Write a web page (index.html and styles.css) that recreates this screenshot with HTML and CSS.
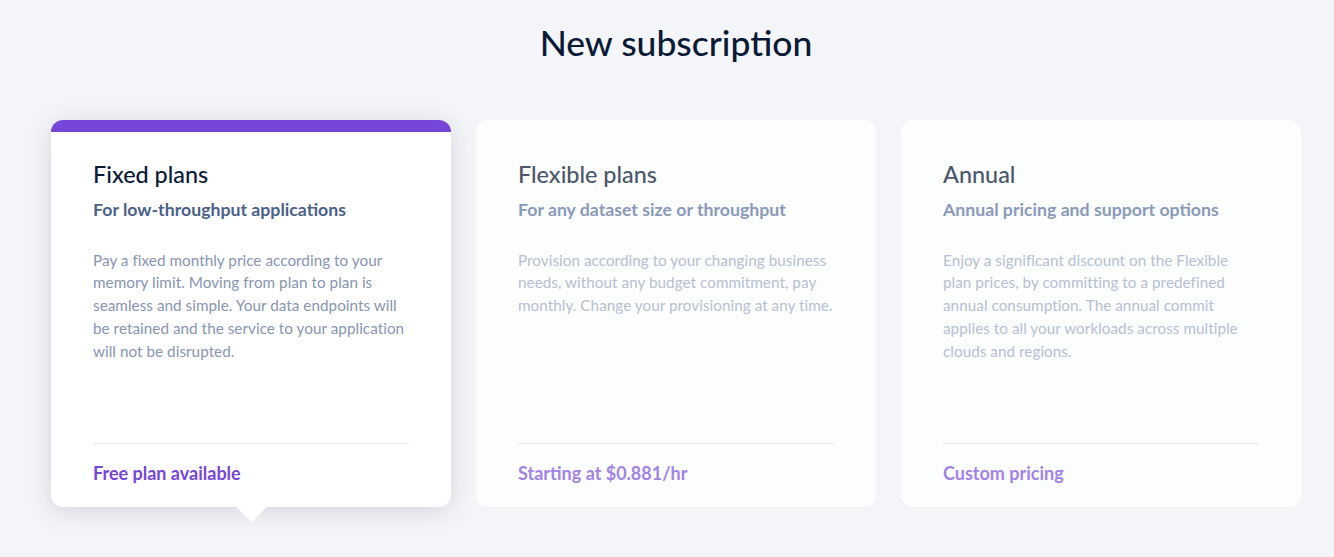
FILE: index.html
```html
<!DOCTYPE html>
<html lang="en">
<head>
<meta charset="utf-8">
<title>New subscription</title>
<link rel="stylesheet" href="styles.css">
</head>
<body>
<main class="page">
  <h1 class="page-title">New subscription</h1>
  <div class="plans">
    <div class="plan plan--active">
      <h2 class="plan-title">Fixed plans</h2>
      <h3 class="plan-subtitle">For low-throughput applications</h3>
      <p class="plan-desc">Pay a fixed monthly price according to your memory limit. Moving from plan to plan is seamless and simple. Your data endpoints will be retained and the service to your application will not be disrupted.</p>
      <div class="plan-footer">Free plan available</div>
    </div>
    <div class="plan">
      <h2 class="plan-title">Flexible plans</h2>
      <h3 class="plan-subtitle">For any dataset size or throughput</h3>
      <p class="plan-desc">Provision according to your changing business needs, without any budget commitment, pay monthly. Change your provisioning at any time.</p>
      <div class="plan-footer">Starting at $0.881/hr</div>
    </div>
    <div class="plan">
      <h2 class="plan-title">Annual</h2>
      <h3 class="plan-subtitle">Annual pricing and support options</h3>
      <p class="plan-desc">Enjoy a significant discount on the Flexible plan prices, by committing to a predefined annual consumption. The annual commit applies to all your workloads across multiple clouds and regions.</p>
      <div class="plan-footer">Custom pricing</div>
    </div>
  </div>
</main>
</body>
</html>
```

FILE: styles.css
```css
* { box-sizing: border-box; }
html {
  background: #f4f5f8;
}
body {
  margin: 0;
  min-height: 557px;
  font-family: Lato, "Open Sans", sans-serif;
  color: #0b1a3a;
}
.page {
  display: flex;
  flex-direction: column;
  align-items: center;
  padding: 20px 0 40px 18px;
}
.page-title {
  margin: 0;
  font-size: 35.5px;
  font-weight: 500;
  line-height: 46px;
  color: #091a37;
}
.plans {
  display: flex;
  gap: 25px;
  margin-top: 54px;
}
.plan {
  position: relative;
  width: 400px;
  height: 387px;
  display: flex;
  flex-direction: column;
  padding: 27px 42px 22px 42px;
  border-top: 12px solid transparent;
  border-radius: 12px;
  background: #fcfdfd;
}
.plan--active {
  background: #ffffff;
  border-top-color: #7646d9;
  box-shadow: 0 4px 24px rgba(30, 40, 70, 0.15);
}
.plan--active::after {
  content: "";
  position: absolute;
  left: 190px;
  bottom: -11px;
  width: 21px;
  height: 21px;
  background: #ffffff;
  transform: rotate(45deg);
}
.plan-title {
  margin: 0;
  font-size: 23.4px;
  font-weight: 500;
  line-height: 30px;
  color: #4b576b;
}
.plan-subtitle {
  margin: 9px 0 0;
  font-size: 17.7px;
  font-weight: 700;
  line-height: 24px;
  color: #8a9abb;
}
.plan-desc {
  flex: 1;
  margin: 26.5px 0 0;
  font-size: 15.25px;
  letter-spacing: 0.04px;
  line-height: 22.75px;
  color: #b6c0d4;
}
.plan-footer {
  border-top: 1px solid #e6e8ee;
  padding-top: 17px;
  font-size: 18px;
  font-weight: 700;
  line-height: 24px;
  color: #a283e8;
}
.plan--active .plan-title { color: #091a37; }
.plan--active .plan-subtitle { color: #4a6189; }
.plan--active .plan-desc { color: #8796b2; }
.plan--active .plan-footer { color: #7646d9; }
```
